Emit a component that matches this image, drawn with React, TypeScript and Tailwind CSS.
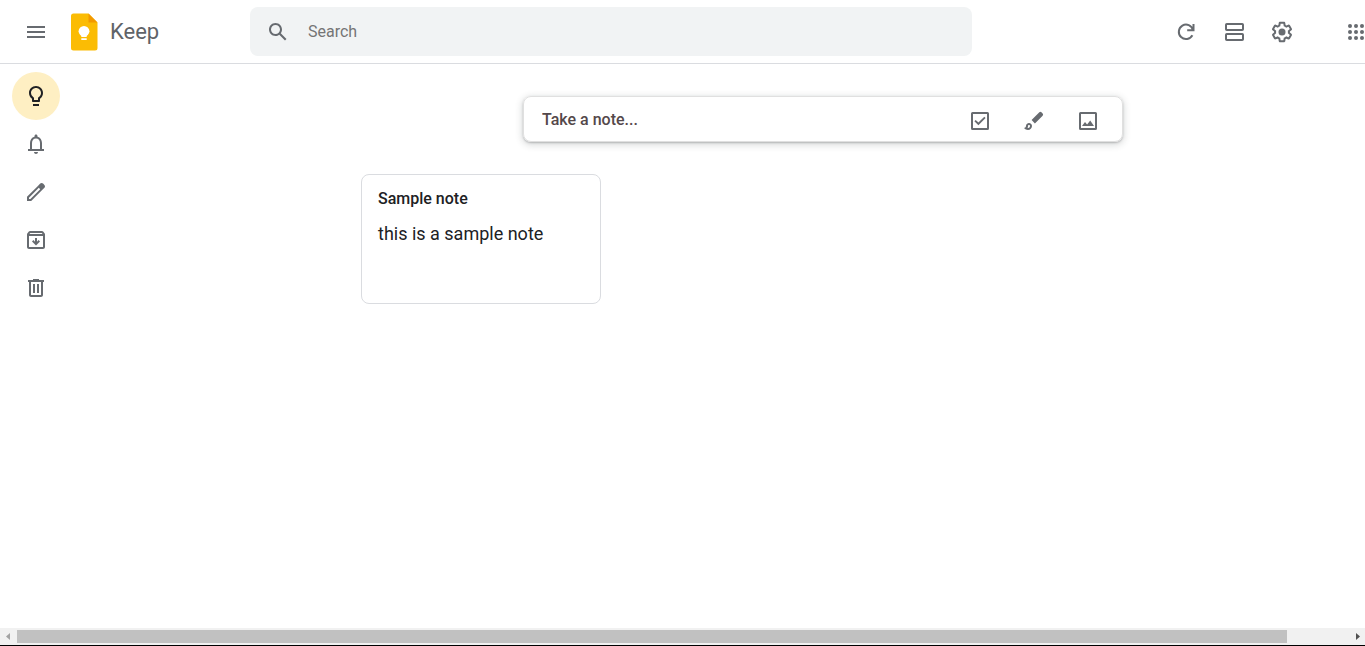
import React from "react";

type IconProps = { children: React.ReactNode; className?: string };

function Icon({ children, className = "text-[#676b70]" }: IconProps) {
  return (
    <svg viewBox="0 0 24 24" fill="currentColor" aria-hidden="true" className={`block size-6 shrink-0 ${className}`}>
      {children}
    </svg>
  );
}

const menuIcon = <path d="M3 18h18v-2H3v2zm0-5h18v-2H3v2zm0-7v2h18V6H3z" />;
const searchIcon = (
  <path d="M20.49 19l-5.73-5.73C15.53 12.2 16 10.91 16 9.5 16 5.91 13.09 3 9.5 3S3 5.91 3 9.5 5.91 16 9.5 16c1.41 0 2.7-.47 3.77-1.24L19 20.49 20.49 19zM5 9.5C5 7.01 7.01 5 9.5 5S14 7.01 14 9.5 11.99 14 9.5 14 5 11.99 5 9.5z" />
);
const refreshIcon = (
  <path
    fill="none"
    stroke="currentColor"
    strokeWidth="2"
    d="M19.5 4v6.2h-6.3M19 10A7.2 7.2 0 1 0 18.4 15.2"
  />
);
const listIcon = (
  <g fill="none" stroke="currentColor" strokeWidth="2">
    <rect x="4" y="4" width="17" height="6" rx="0.8" />
    <rect x="4" y="14" width="17" height="6" rx="0.8" />
  </g>
);
const gearIcon = (
  <>
    <path d="M13.85 22.25h-3.7c-.74 0-1.36-.54-1.45-1.27l-.27-1.89c-.27-.14-.53-.29-.79-.46l-1.8.72c-.7.26-1.47-.03-1.81-.65L2.2 15.53c-.35-.66-.2-1.44.36-1.88l1.53-1.19c-.01-.15-.02-.3-.02-.46 0-.15.01-.31.02-.46l-1.52-1.19c-.59-.45-.74-1.26-.37-1.88l1.85-3.19c.34-.62 1.11-.9 1.79-.63l1.81.73c.26-.17.52-.32.78-.46l.27-1.91c.09-.7.71-1.25 1.44-1.25h3.7c.74 0 1.36.54 1.45 1.27l.27 1.89c.27.14.53.29.79.46l1.8-.72c.71-.26 1.48.03 1.82.65l1.84 3.18c.36.66.2 1.44-.36 1.88l-1.52 1.19c.01.15.02.3.02.46s-.01.31-.02.46l1.52 1.19c.56.45.72 1.23.37 1.86l-1.86 3.22c-.34.62-1.11.9-1.8.63l-1.8-.72c-.26.17-.52.32-.78.46l-.27 1.91c-.1.68-.72 1.22-1.46 1.22zm-3.23-2h2.76l.37-2.55.53-.22c.44-.18.88-.44 1.34-.78l.45-.34 2.38.96 1.38-2.4-2.03-1.58.07-.56c.03-.26.06-.51.06-.78s-.03-.53-.06-.78l-.07-.56 2.03-1.58-1.39-2.4-2.39.96-.45-.35c-.42-.32-.87-.58-1.33-.77l-.52-.22-.37-2.55h-2.76l-.37 2.55-.53.21c-.44.19-.88.44-1.34.79l-.45.33-2.38-.95-1.39 2.39 2.03 1.58-.07.56a7 7 0 0 0-.06.79c0 .26.02.53.06.78l.07.56-2.03 1.58 1.38 2.4 2.39-.96.45.35c.43.33.86.58 1.33.77l.53.22.38 2.55z" />
    <circle cx="12" cy="12" r="3.5" />
  </>
);
const appsIcon = [6, 12, 18].map((y) =>
  [6, 12, 18].map((x) => <circle key={`${x}-${y}`} cx={x} cy={y} r="2" />),
);
const bulbIcon = (
  <path d="M9 20h6v2H9zM12 2C8.14 2 5 5.14 5 9c0 2.38 1.19 4.47 3 5.74V17c0 .55.45 1 1 1h6c.55 0 1-.45 1-1v-2.26c1.81-1.27 3-3.36 3-5.74 0-3.86-3.14-7-7-7zm2.85 11.1-.85.6V16h-4v-2.3l-.85-.6A4.997 4.997 0 0 1 7 9c0-2.76 2.24-5 5-5s5 2.24 5 5c0 1.63-.8 3.16-2.15 4.1z" />
);
const bellIcon = (
  <path d="M18 17v-6c0-3.07-1.63-5.64-4.5-6.32V4c0-.83-.67-1.5-1.5-1.5s-1.5.67-1.5 1.5v.68C7.64 5.36 6 7.92 6 11v6H4v2h16v-2h-2zm-2 0H8v-6c0-2.48 1.51-4.5 4-4.5s4 2.02 4 4.5v6zm-4 5c1.1 0 2-.9 2-2h-4c0 1.1.9 2 2 2z" />
);
const pencilIcon = (
  <path d="M20.41 4.94l-1.35-1.35c-.78-.78-2.05-.78-2.83 0L13.4 6.41 3 16.82V21h4.18l10.46-10.46 2.77-2.77c.79-.78.79-2.05 0-2.83zm-14 14.12L5 19v-1.36l9.82-9.82 1.41 1.41-9.82 9.83z" />
);
const archiveIcon = (
  <path d="M20.54 5.23l-1.39-1.68C18.88 3.21 18.47 3 18 3H6c-.47 0-.88.21-1.16.55L3.46 5.23C3.17 5.57 3 6.02 3 6.5V19c0 1.1.9 2 2 2h14c1.1 0 2-.9 2-2V6.5c0-.48-.17-.93-.46-1.27zM6.24 5h11.52l.83 1H5.42l.82-1zM5 19V8h14v11H5zm11-5.5l-4 4-4-4 1.41-1.41L11 13.67V10h2v3.67l1.59-1.58L16 13.5z" />
);
const trashIcon = (
  <path d="M15 4V3H9v1H4v2h1v13c0 1.1.9 2 2 2h10c1.1 0 2-.9 2-2V6h1V4h-5zm2 15H7V6h10v13zM9 8h2v9H9zm4 0h2v9h-2z" />
);
const checkboxIcon = (
  <path d="M19.500 3h-15A1.500 1.500 0 0 0 3 4.500v15A1.500 1.500 0 0 0 4.500 21h15a1.500 1.500 0 0 0 1.500-1.500v-15A1.500 1.500 0 0 0 19.500 3zM19 19H5V5h14v14zM17.600 9l-1.300-1.300-5.900 5.900-2.700-2.700L6.400 12.200l4 4z" />
);
const brushIcon = (
  <path d="M20.640 4.540l-1.180-1.180a1.500 1.500 0 0 0-2.120 0L9.600 11.100l3.300 3.300 7.740-7.740a1.500 1.500 0 0 0 0-2.120zM7 14c-1.660 0-3 1.340-3 3 0 1.310-1.160 2-2 2 .920 1.220 2.490 2 4 2 2.210 0 4-1.790 4-4 0-1.660-1.340-3-3-3zm-.8 5c-.2 0-.4 0-.6-.05.25-.55.4-1.200.4-1.950 0-.55.45-1 1-1s1 .45 1 1c0 1.100-.8 2-1.800 2z" />
);
const imageIcon = (
  <path d="M19.500 3h-15A1.500 1.500 0 0 0 3 4.500v15A1.500 1.500 0 0 0 4.500 21h15a1.500 1.500 0 0 0 1.500-1.500v-15A1.500 1.500 0 0 0 19.500 3zM19 19H5V5h14v14zM6 17l3-4 2.100 2.500 3.100-4L18 17z" />
);

function Logo() {
  return (
    <svg viewBox="0 0 28 38" aria-hidden="true" className="block h-[38px] w-7 shrink-0">
      <path fill="#fbbc04" d="M3.500 .5H18.500l9 9V35a2.500 2.500 0 0 1-2.500 2.500H3.500A2.500 2.500 0 0 1 1 35V3A2.500 2.500 0 0 1 3.500 .5z" />
      <path fill="#f29900" d="M18.500 .5l9 9h-9z" />
      <circle fill="#fff" cx="14" cy="18.300" r="5.400" />
      <path fill="#fff" d="M11.300 20h5.400v4h-5.400zM11.300 25.300h5.400v1.800h-5.400z" />
    </svg>
  );
}

function IconButton({ label, children, className = "" }: { label: string; children: React.ReactNode; className?: string }) {
  return (
    <button type="button" aria-label={label} className={`flex size-12 shrink-0 items-center justify-center rounded-full ${className}`}>
      <Icon>{children}</Icon>
    </button>
  );
}

const sections = [
  { label: "Notes", icon: bulbIcon, active: true },
  { label: "Reminders", icon: bellIcon },
  { label: "Edit labels", icon: pencilIcon },
  { label: "Archive", icon: archiveIcon },
  { label: "Trash", icon: trashIcon },
];

export default function App() {
  return (
    <div className="flex min-h-screen flex-col overflow-x-hidden bg-white font-['Roboto',sans-serif] text-[#202124]">
      <header className="flex h-16 shrink-0 items-center border-b border-[#dadce0]">
        <div className="flex w-[250px] shrink-0 items-center pl-3">
          <IconButton label="Main menu">{menuIcon}</IconButton>
          <a href="#" className="ml-[10px] flex items-center gap-3 text-[22px] leading-6 text-[#5f6368]">
            <Logo />
            Keep
          </a>
        </div>
        <label className="flex h-[49px] max-w-[722px] flex-1 items-center rounded-lg bg-[#f1f3f4] pl-4">
          <Icon>{searchIcon}</Icon>
          <input
            type="text"
            aria-label="Search"
            placeholder="Search"
            className="ml-[18px] min-w-0 flex-1 bg-transparent text-base outline-none placeholder:text-[#757575]"
          />
        </label>
        <div className="-mr-[15px] ml-auto flex shrink-0">
          <IconButton label="Refresh">{refreshIcon}</IconButton>
          <IconButton label="List view">{listIcon}</IconButton>
          <IconButton label="Settings">{gearIcon}</IconButton>
          <IconButton label="Google apps" className="ml-[26px]">{appsIcon}</IconButton>
        </div>
      </header>

      <div className="flex flex-1">
        <nav className="flex w-[72px] shrink-0 flex-col pt-2 pl-3">
          {sections.map((s) => (
            <a
              key={s.label}
              href="#"
              aria-label={s.label}
              className={`flex size-12 items-center justify-center rounded-full ${s.active ? "bg-[#feefc3]" : ""}`}
            >
              <Icon className={s.active ? "text-[#202124]" : "text-[#676b70]"}>{s.icon}</Icon>
            </a>
          ))}
        </nav>
        <main className="min-w-0 flex-1 pt-8 pl-[209px]">
          <div className="mx-auto flex h-[46px] max-w-[600px] items-center rounded-lg border border-[#e0e0e0] pt-[2px] pr-[10px] pl-[18px] shadow-[0_1px_2px_0_rgba(60,64,67,0.3),0_2px_6px_2px_rgba(60,64,67,0.15)]">
            <input
              type="text"
              aria-label="Take a note"
              placeholder="Take a note..."
              className="min-w-0 flex-1 bg-transparent text-base font-medium outline-none placeholder:text-[#54484a]"
            />
            <div className="flex gap-[6px] pt-[2px]">
              <IconButton label="New list">{checkboxIcon}</IconButton>
              <IconButton label="New note with drawing">{brushIcon}</IconButton>
              <IconButton label="New note with image">{imageIcon}</IconButton>
            </div>
          </div>
          <article className="mt-8 ml-20 min-h-[130px] w-60 rounded-lg border border-[#dadce0] px-4 py-3">
            <h2 className="text-base font-medium">Sample note</h2>
            <p className="mt-[11px] text-lg leading-6">this is a sample note</p>
          </article>
        </main>
      </div>

      <div className="flex h-[18px] shrink-0 items-center border-b border-black bg-[#f1f1f1]">
        <svg viewBox="0 0 17 17" aria-hidden="true" className="size-[17px] shrink-0">
          <path fill="#a3a3a3" d="M10 5v7L6 8.500z" />
        </svg>
        <div className="flex-1">
          <div className="h-[13px] w-[95.4%] bg-[#c1c1c1]" />
        </div>
        <svg viewBox="0 0 17 17" aria-hidden="true" className="size-[17px] shrink-0">
          <path fill="#505050" d="M8 5v7l4-3.500z" />
        </svg>
      </div>
    </div>
  );
}
